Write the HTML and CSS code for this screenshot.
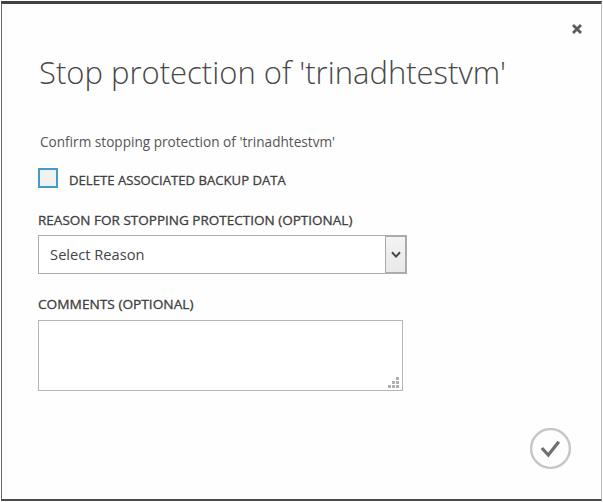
FILE: index.html
```html
<!DOCTYPE html>
<html lang="en">
<head>
<meta charset="utf-8">
<title>Stop protection</title>
<link rel="stylesheet" href="styles.css">
</head>
<body>
<main class="dialog">
  <header class="topbar">
    <svg class="close" viewBox="0 0 12 12"><path d="M2 2l8 8M10 2l-8 8"/></svg>
  </header>
  <h1 class="title"><span>Stop protection of 'trinadhtestvm'</span></h1>
  <p class="intro"><span>Confirm stopping protection of 'trinadhtestvm'</span></p>
  <div class="check"><i class="box"></i><span class="check-label">DELETE ASSOCIATED BACKUP DATA</span></div>
  <div class="label reason"><span>REASON FOR STOPPING PROTECTION (OPTIONAL)</span></div>
  <div class="select">
    <span class="value">Select Reason</span>
    <div class="arrow"><svg viewBox="0 0 10 8"><path d="M1 1.3L5 5.6L9 1.3"/></svg></div>
  </div>
  <div class="label comments"><span>COMMENTS (OPTIONAL)</span></div>
  <div class="area">
    <svg class="grip" viewBox="0 0 11 11"><path d="M8 0h3v3h-3zM4 4h3v3h-3zM8 4h3v3h-3zM0 8h3v3h-3zM4 8h3v3h-3zM8 8h3v3h-3z"/></svg>
  </div>
  <footer class="actions">
    <svg class="ok" viewBox="0 0 42 42"><circle cx="20.5" cy="20.5" r="19.4"/><path d="M11.8 20l6.5 7L28.8 13.8"/></svg>
  </footer>
</main>
</body>
</html>
```
FILE: styles.css
```css
* { box-sizing: border-box; }
body {
  margin: 0;
  background: #fff;
  font-family: "Open Sans", "Noto Sans", sans-serif;
  color: #484848;
}
.dialog {
  height: 500px;
  margin: 1px 1px 1px;
  padding: 0 0 0 36px;
  display: flex;
  flex-direction: column;
  align-items: flex-start;
  background: #fefefe;
  border: solid;
  border-width: 3px 1px 2px;
  border-color: #3f4442 #bdbdbd #4a4a4c #66696a;
}
.topbar {
  align-self: stretch;
  height: 46px;
  padding: 19px 18px 0 0;
  display: flex;
  justify-content: flex-end;
}
.close { width: 12px; height: 12px; fill: none; stroke: #5c5c5c; stroke-width: 2.8; }
.title, .intro, .label { margin: 0; white-space: nowrap; }
.title { height: 44px; padding-left: 1px; font-size: 32px; line-height: 44px; font-weight: 300; }
.intro { height: 20px; margin-top: 38px; padding-left: 2px; font-size: 14px; line-height: 20px; color: #555; }
.title span, .intro span, .label span, .check-label, .value { display: inline-block; transform-origin: 0 50%; white-space: nowrap; }
.title span { transform: scaleX(0.969); }
.intro span { transform: scaleX(0.972); }
.check { display: flex; align-items: center; height: 20px; margin-top: 16px; }
.box { width: 20px; height: 20px; border: 2px solid #429bcb; background: #f1f1f1; }
.check-label { margin-left: 11px; padding-top: 3px; transform: scaleX(1.01); }
.check-label, .label { font-size: 13px; line-height: 20px; font-weight: 400; color: #404040; -webkit-text-stroke: 0.3px #404040; }
.reason { margin-top: 22px; }
.reason span { transform: scaleX(1.04); }
.comments span { transform: scaleX(1.053); }
.select {
  width: 369px; height: 39px; margin-top: 5px;
  display: flex; justify-content: space-between;
  border: 1px solid #adadad; background: #fff;
}
.value { padding-left: 11px; font-size: 14.5px; line-height: 37px; color: #444; transform: scaleX(1.01); }
.arrow { width: 21px; display: flex; align-items: center; justify-content: center; border: 1px solid #aaa; background: linear-gradient(#f3f3f3, #e9e9e9); }
.arrow svg { width: 10px; height: 8px; fill: none; stroke: #444; stroke-width: 2; }
.comments { margin-top: 20px; }
.area { width: 365px; height: 71px; margin-top: 6px; padding: 0 3px 2px 0; display: flex; align-items: flex-end; justify-content: flex-end; border: 1px solid #b5b5b8; background: #fff; }
.grip { width: 11px; height: 11px; fill: #b0b0b0; }
.actions { align-self: stretch; margin-top: 37px; padding-right: 29px; display: flex; justify-content: flex-end; }
.ok { width: 42px; height: 42px; fill: none; }
.ok circle { stroke: #c6c6c6; stroke-width: 2.4; }
.ok path { stroke: #707070; stroke-width: 3.2; }
```
